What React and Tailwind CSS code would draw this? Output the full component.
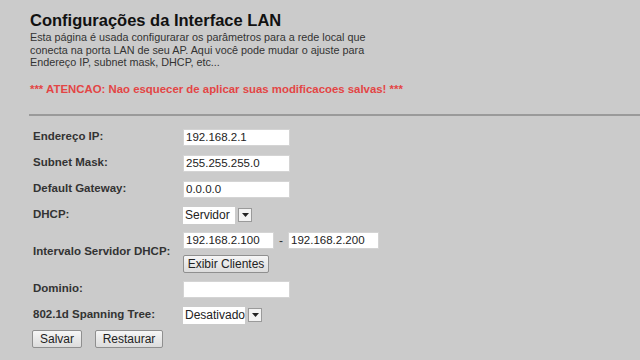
import React from 'react'

function TextBox({ value, w = 'w-[107px]' }) {
  return (
    <div className={`${w} h-[17px] bg-white border border-[#d4d4d4] pl-[2px] text-[11.5px] leading-[15px] text-[#222]`}>
      {value}
    </div>
  )
}

function Select({ value, w }) {
  return (
    <div className="flex items-center gap-[3px]">
      <div className={`${w} h-[17px] bg-white pl-[2px] text-[12px] leading-[17px] text-[#222]`}>{value}</div>
      <div className="w-[14px] h-[14px] bg-[#f2f2f2] border border-[#9a9a9a] flex items-center justify-center">
        <svg width="7" height="4" viewBox="0 0 7 4"><path d="M0 0h7L3.5 4z" fill="#222" /></svg>
      </div>
    </div>
  )
}

function Btn({ children, w }) {
  return (
    <div className={`${w} h-[18px] border border-[#8f8f8f] rounded-[2px] bg-gradient-to-b from-[#f6f6f6] to-[#dcdcdc] text-[12px] leading-[16px] text-[#222] text-center`}>
      {children}
    </div>
  )
}

function Row({ label, children, h = 'h-[26px]' }) {
  return (
    <div className={`flex items-center ${h}`}>
      <div className="w-[153px] pl-[3px] font-bold text-[11.5px] text-[#333]">{label}</div>
      {children}
    </div>
  )
}

export default function App() {
  return (
    <div className="w-[640px] h-[360px] overflow-hidden bg-[#cbcbcb]" style={{ fontFamily: '"Liberation Sans", Arial, sans-serif' }}>
      <div className="pl-[30px] pt-[10px]">
        <h1 className="font-bold text-[16.5px] leading-[20px] text-[#111]">Configurações da Interface LAN</h1>
        <p className="text-[10.8px] leading-[12.7px] text-[#333] mt-[1px]">
          Esta página é usada configurarar os parâmetros para a rede local que<br />
          conecta na porta LAN de seu AP. Aqui você pode mudar o ajuste para<br />
          Endereço IP, subnet mask, DHCP, etc...
        </p>
        <p className="font-bold text-[11.4px] leading-[14px] text-[#e34545] mt-[13px]">
          *** ATENCAO: Nao esquecer de aplicar suas modificacoes salvas! ***
        </p>
      </div>
      <div className="ml-[29px] mt-[18px] h-[2px] bg-[#9a9a9a]" />

      <div className="pl-[30px] pt-[8px]">
        <Row label="Endereço IP:"><TextBox value="192.168.2.1" /></Row>
        <Row label="Subnet Mask:"><TextBox value="255.255.255.0" /></Row>
        <Row label="Default Gateway:"><TextBox value="0.0.0.0" /></Row>
        <Row label="DHCP:"><Select value="Servidor" w="w-[52px]" /></Row>
        <Row label="Intervalo Servidor DHCP:" h="h-[48px]">
          <div className="flex flex-col gap-[5px]">
            <div className="flex items-center">
              <TextBox value="192.168.2.100" w="w-[91px]" />
              <span className="w-[14px] text-center text-[12px] text-[#333]">-</span>
              <TextBox value="192.168.2.200" w="w-[91px]" />
            </div>
            <Btn w="w-[86px]">Exibir Clientes</Btn>
          </div>
        </Row>
        <Row label="Dominio:"><TextBox value="" /></Row>
        <Row label="802.1d Spanning Tree:"><Select value="Desativado" w="w-[62px]" /></Row>
        <div className="flex gap-[13px] pl-[2px] mt-[2px]">
          <Btn w="w-[50px]">Salvar</Btn>
          <Btn w="w-[68px]">Restaurar</Btn>
        </div>
      </div>
    </div>
  )
}
